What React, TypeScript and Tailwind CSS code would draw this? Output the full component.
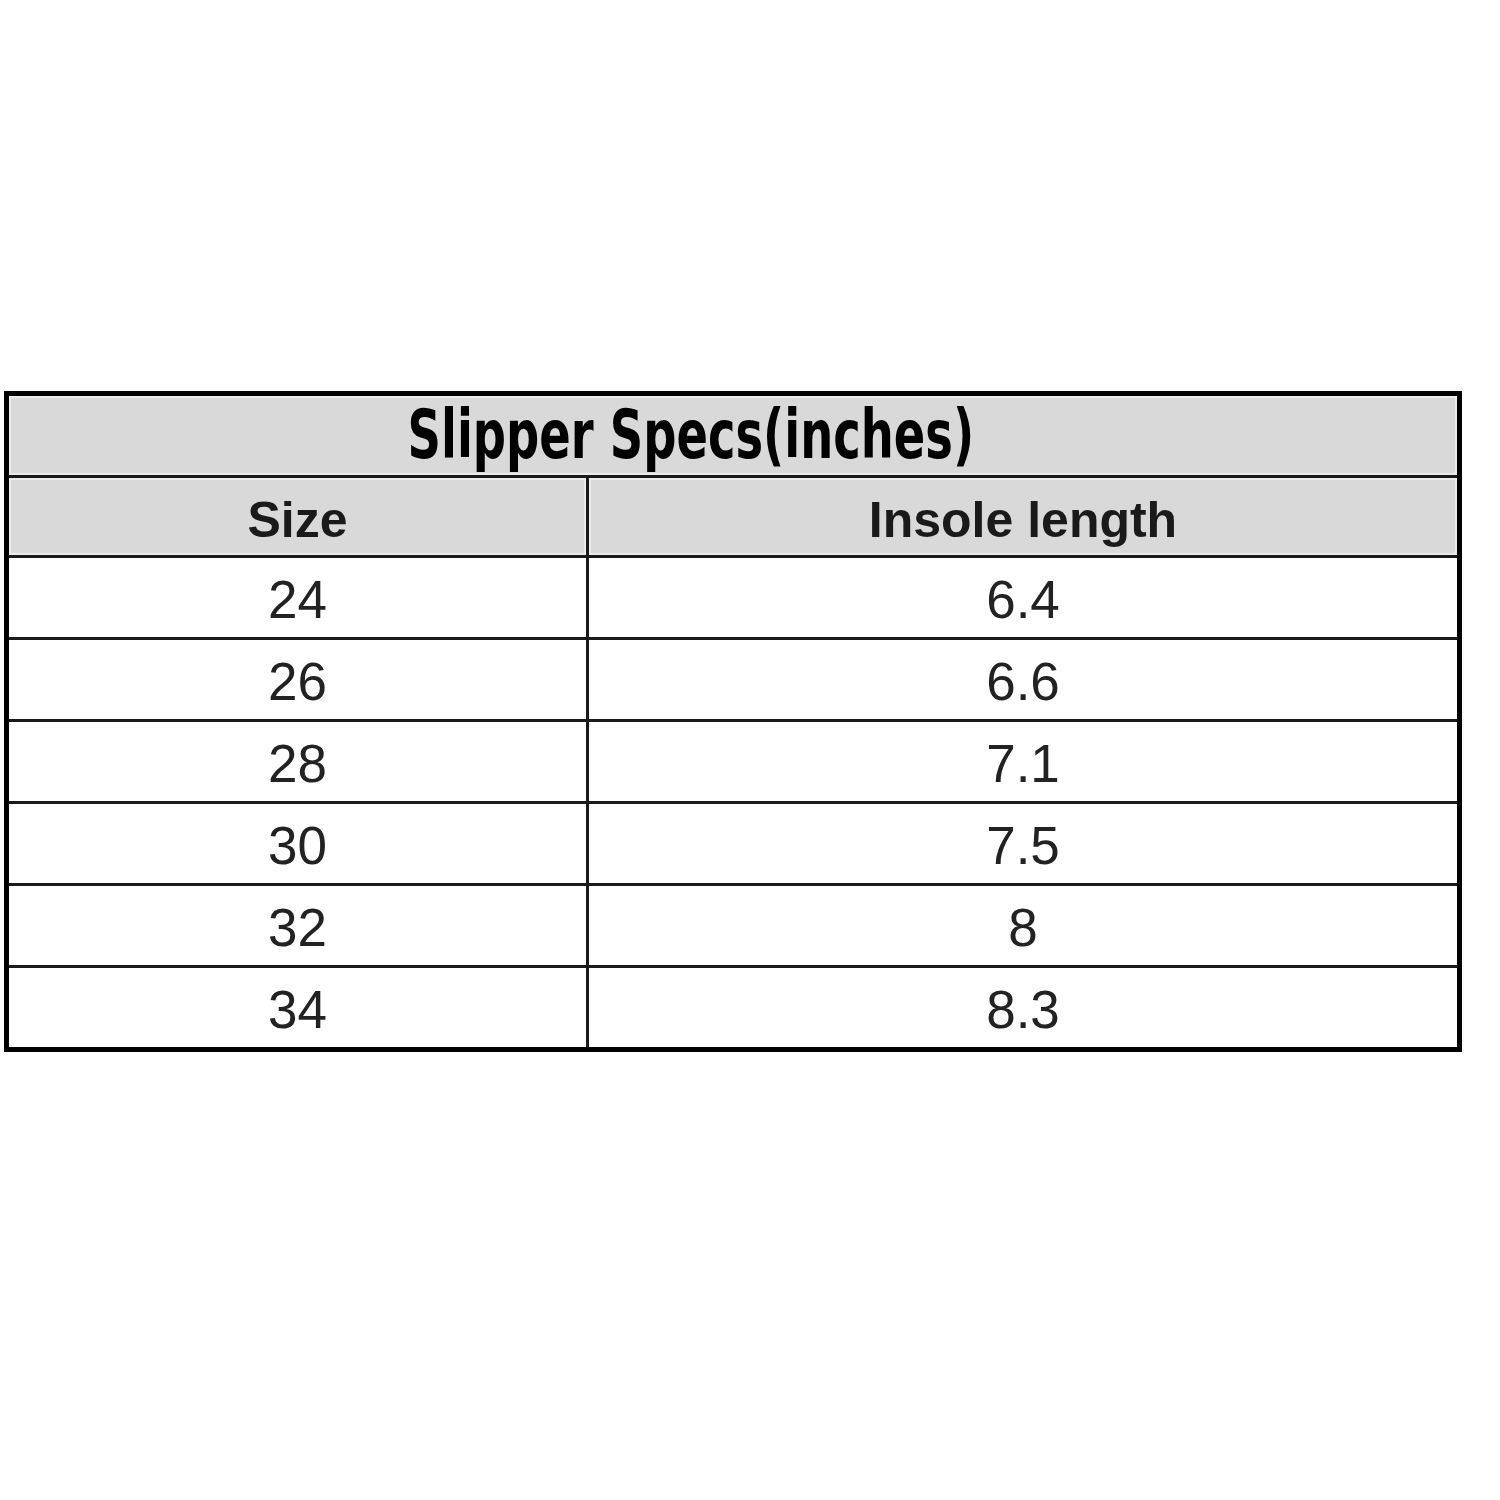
import React from 'react';

const rows: [string, string][] = [
  ['24', '6.4'],
  ['26', '6.6'],
  ['28', '7.1'],
  ['30', '7.5'],
  ['32', '8'],
  ['34', '8.3'],
];

const cellText = "font-['Liberation_Sans',Arial,sans-serif] text-[53px] leading-none text-[#222] pt-[4px]";
const headText = "bg-[#d9d9d9] border-2 border-[#ebebeb] flex items-center justify-center pt-[6px] font-['Liberation_Sans',Arial,sans-serif] font-bold text-[50px] leading-none text-[#1a1a1a]";

export default function App() {
  return (
    <div className="w-[1500px] h-[1500px] bg-white pt-[391px] pl-[4px]">
      <div className="w-[1458px] border-[5px] border-black bg-white">
        {/* title */}
        <div className="h-[79px] bg-[#d9d9d9] border-2 border-[#ebebeb] flex items-center justify-center pr-[84px]">
          <span className="inline-block scale-x-[0.77] font-['DejaVu_Sans',sans-serif] [font-stretch:condensed] font-bold text-[67px] leading-none text-black">
            Slipper Specs(inches)
          </span>
        </div>
        <div className="h-[3px] bg-[#1a1a1a]" />

        {/* header */}
        <div className="grid grid-cols-[577px_3px_1fr] grid-rows-[77px] h-[77px]">
          <div className={headText}>Size</div>
          <div className="bg-[#1a1a1a]" />
          <div className={headText}>Insole length</div>
        </div>

        {rows.map(([size, len]) => (
          <React.Fragment key={size}>
            <div className="h-[3px] bg-[#1a1a1a]" />
            <div className="grid grid-cols-[577px_3px_1fr] grid-rows-[79px] h-[79px]">
              <div className={`flex items-center justify-center ${cellText}`}>{size}</div>
              <div className="bg-[#1a1a1a]" />
              <div className={`flex items-center justify-center ${cellText}`}>{len}</div>
            </div>
          </React.Fragment>
        ))}
      </div>
    </div>
  );
}
